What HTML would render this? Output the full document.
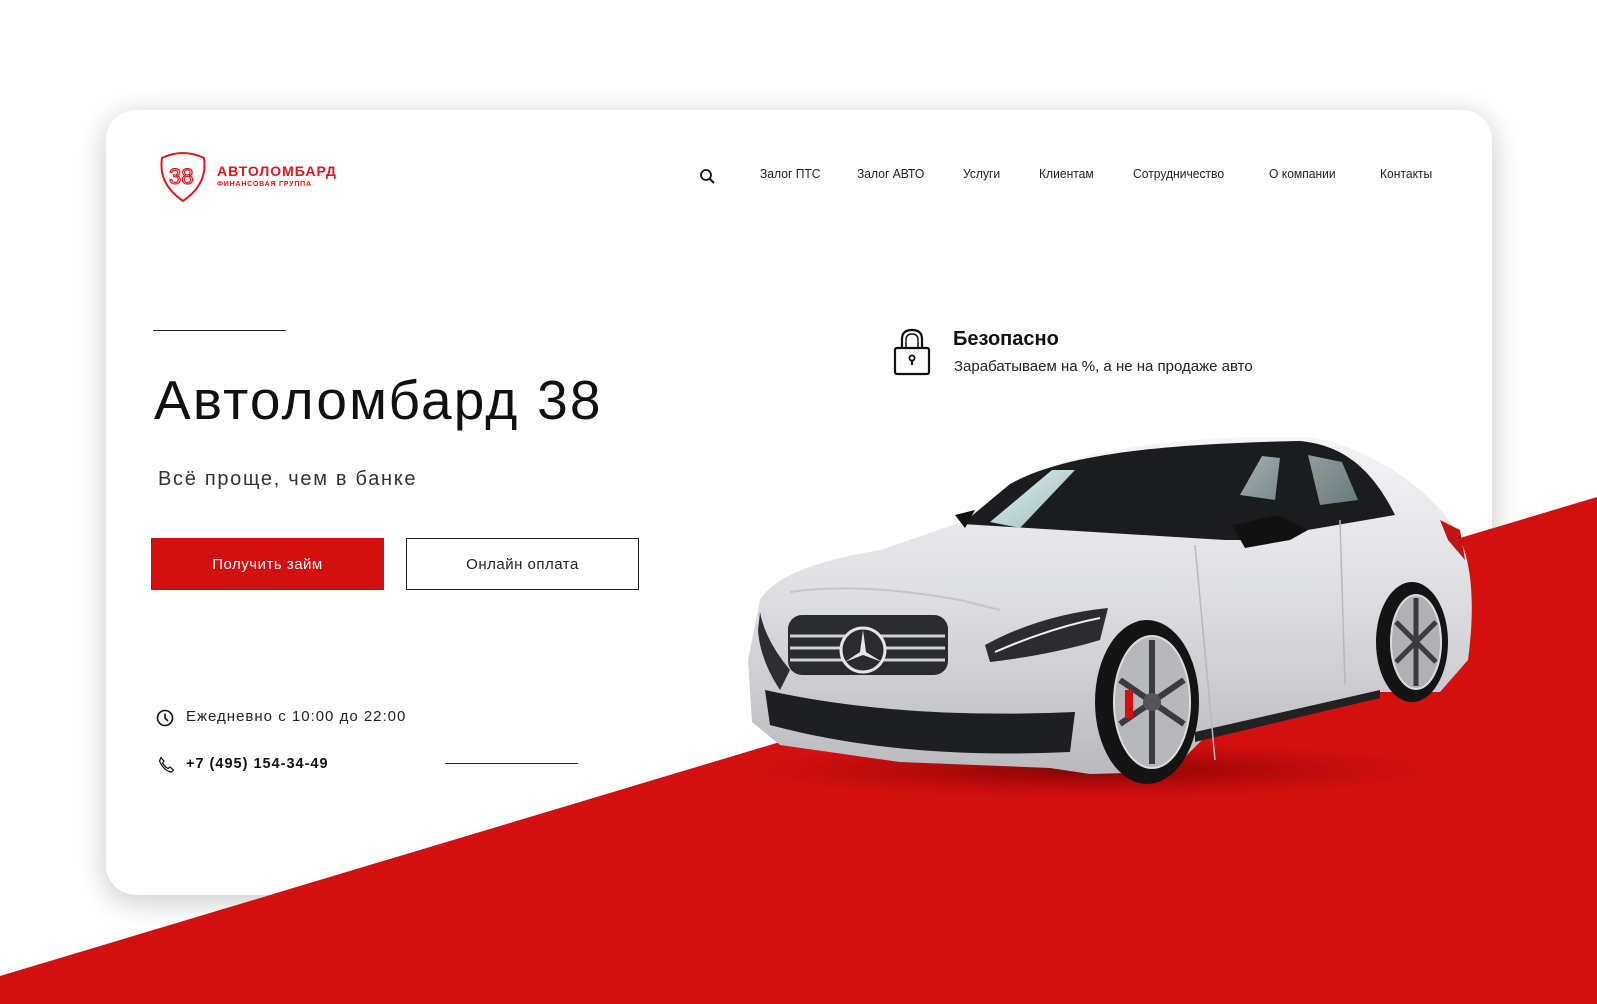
<!DOCTYPE html>
<html><head><meta charset="utf-8"><style>
*{margin:0;padding:0;box-sizing:border-box}
html,body{width:1597px;height:1004px;overflow:hidden;background:#fff;font-family:"Liberation Sans","DejaVu Sans",sans-serif;color:#111}
.abs{position:absolute}
#card{position:absolute;left:106px;top:110px;width:1386px;height:785px;border-radius:30px;background:#fff;box-shadow:0 6px 30px rgba(0,0,0,.22)}
.nav{position:absolute;top:166px;font-size:13px;color:#222;transform:scaleX(.93);transform-origin:left;white-space:nowrap}
.btn{position:absolute;top:538px;width:233px;height:52px;display:flex;align-items:center;justify-content:center;font-size:15px;letter-spacing:.5px}
</style></head><body>
<div id="card"></div>
<svg class="abs" style="left:0;top:0" width="1597" height="1004">
<defs><clipPath id="cc"><rect x="106" y="110" width="1386" height="785" rx="30"/></clipPath>
<radialGradient id="sh"><stop offset="0" stop-color="#5a0000" stop-opacity=".7"/><stop offset="1" stop-color="#a00" stop-opacity="0"/></radialGradient></defs>
<polygon points="0,976 1597,497 1597,1004 0,1004" fill="#d31010"/>
<g clip-path="url(#cc)"><polygon points="0,976 1597,497 1597,1004 0,1004" fill="#d31010"/></g>
</svg>

<!-- logo -->
<svg class="abs" style="left:158px;top:150px" width="54" height="54" viewBox="0 0 54 54">
<path d="M4 8 Q25 -2 46 8 Q50 34 25 51 Q0 34 4 8Z" fill="none" stroke="#e0161b" stroke-width="2"/>
<text x="11" y="34" font-size="22" fill="none" stroke="#e0161b" stroke-width="1.2" font-family="Liberation Sans">38</text>
</svg>
<div class="abs" style="left:217px;top:163px;font-size:14px;font-weight:bold;color:#e0161b;letter-spacing:1px">АВТОЛОМБАРД</div>
<div class="abs" style="left:217px;top:181px;font-size:7px;font-weight:bold;color:#e0161b;letter-spacing:.8px">ФИНАНСОВАЯ ГРУППА</div>

<!-- nav -->
<svg class="abs" style="left:699px;top:168px" width="18" height="18" viewBox="0 0 18 18"><circle cx="7" cy="7" r="5" fill="none" stroke="#111" stroke-width="1.8"/><path d="M10.5 10.5 L15 15" stroke="#111" stroke-width="2"/></svg>
<div class="nav" style="left:760px">Залог ПТС</div>
<div class="nav" style="left:857px">Залог АВТО</div>
<div class="nav" style="left:963px">Услуги</div>
<div class="nav" style="left:1039px">Клиентам</div>
<div class="nav" style="left:1133px">Сотрудничество</div>
<div class="nav" style="left:1269px">О компании</div>
<div class="nav" style="left:1380px">Контакты</div>

<!-- hero -->
<div class="abs" style="left:153px;top:330px;width:133px;height:1px;background:#222"></div>
<div class="abs" style="left:154px;top:368px;font-size:55px;letter-spacing:2.2px;color:#111;white-space:nowrap">Автоломбард 38</div>
<div class="abs" style="left:158px;top:468px;font-size:20px;letter-spacing:1.7px;color:#333;white-space:nowrap">Всё проще, чем в банке</div>
<div class="btn" style="left:151px;background:#d31010;color:#fff">Получить займ</div>
<div class="btn" style="left:406px;border:1.5px solid #222;color:#222">Онлайн оплата</div>

<svg class="abs" style="left:156px;top:709px" width="18" height="18" viewBox="0 0 18 18"><circle cx="9" cy="9" r="7.5" fill="none" stroke="#111" stroke-width="1.6"/><path d="M9 4.5 V9 L12 12" fill="none" stroke="#111" stroke-width="1.6"/></svg>
<div class="abs" style="left:186px;top:708px;font-size:15px;letter-spacing:1px;color:#222;white-space:nowrap">Ежедневно с 10:00 до 22:00</div>
<svg class="abs" style="left:158px;top:756px" width="17" height="17" viewBox="0 0 17 17"><path d="M3 1.5 L6 5 L4.5 7 Q7 11 10 12.5 L12 11 L15.5 14 L13.5 16 Q6 15 1.5 5 Z" fill="none" stroke="#111" stroke-width="1.2"/></svg>
<div class="abs" style="left:186px;top:756px;font-size:14.5px;font-weight:bold;letter-spacing:1px;color:#111;white-space:nowrap">+7 (495) 154-34-49</div>
<div class="abs" style="left:445px;top:763px;width:133px;height:1px;background:#222"></div>

<!-- secure -->
<svg class="abs" style="left:893px;top:327px" width="38" height="50" viewBox="0 0 38 50"><path d="M9 21 V12 Q9 3 19 3 Q29 3 29 12 V21" fill="none" stroke="#111" stroke-width="2.2"/><path d="M13 21 V13 Q13 7 19 7 Q25 7 25 13 V21" fill="none" stroke="#111" stroke-width="1.5"/><rect x="2" y="21" width="34" height="26" rx="2" fill="#fff" stroke="#111" stroke-width="2.2"/><circle cx="19" cy="31" r="2.6" fill="none" stroke="#111" stroke-width="1.8"/><path d="M19 33 V38" stroke="#111" stroke-width="2.2"/></svg>
<div class="abs" style="left:953px;top:328px;font-size:20px;font-weight:bold;color:#111">Безопасно</div>
<div class="abs" style="left:954px;top:358px;font-size:15px;color:#222;white-space:nowrap">Зарабатываем на %, а не на продаже авто</div>

<!-- car -->
<svg class="abs" style="left:0;top:0" width="1597" height="1004">
<defs>
<linearGradient id="bd" x1="0" y1="0" x2="0" y2="1"><stop offset="0" stop-color="#f4f4f6"/><stop offset=".5" stop-color="#dcdde0"/><stop offset="1" stop-color="#b9babe"/></linearGradient>
<linearGradient id="gl" x1="0" y1="0" x2="1" y2="1"><stop offset="0" stop-color="#dff1f2"/><stop offset="1" stop-color="#9fb9bb"/></linearGradient>
</defs>
<ellipse cx="1090" cy="770" rx="360" ry="30" fill="url(#sh)"/>
<path d="M760,600 C775,575 820,560 880,550 L962,522 L1010,485 C1060,455 1150,440 1250,437 L1310,437 C1360,445 1420,480 1450,522 C1472,550 1476,600 1468,660 L1440,692 L1380,692 L1210,732 L1170,772 L1090,774 L1050,768 L900,762 L780,745 L752,722 L748,660 Z" fill="url(#bd)"/>
<path d="M962,524 L1010,484 C1060,456 1150,444 1300,441 C1340,445 1370,465 1395,515 L1250,540 L1225,540 Z" fill="#1b1c1e"/>
<path d="M990,522 L1052,470 L1075,470 L1020,528 Z" fill="url(#gl)"/>
<path d="M1240,495 L1262,456 L1280,458 L1275,500 Z" fill="url(#gl)" opacity=".7"/>
<path d="M1308,455 L1342,462 L1358,500 L1320,505 Z" fill="url(#gl)" opacity=".6"/>
<path d="M1232,525 L1278,515 L1308,530 L1290,540 L1245,548 Z" fill="#111"/>
<path d="M955,515 L975,510 L965,528 Z" fill="#111"/>
<path d="M790,592 Q860,582 960,600 L1000,610" fill="none" stroke="#c5c6c9" stroke-width="2"/>
<rect x="788" y="615" width="160" height="60" rx="14" fill="#2a2b2e"/>
<path d="M790,636 H945 M790,648 H945 M790,660 H945" stroke="#cfd0d3" stroke-width="3"/>
<circle cx="863" cy="650" r="22" fill="#2a2b2e" stroke="#e6e6e8" stroke-width="3"/>
<path d="M863,630 L866,652 L882,662 L863,655 L845,662 L860,652 Z" fill="#e6e6e8"/>
<path d="M985,645 Q1040,615 1108,608 L1100,640 Q1050,655 990,662 Z" fill="#2b2c30"/>
<path d="M995,652 Q1050,628 1100,618" stroke="#f0f0f0" stroke-width="2" fill="none"/>
<path d="M765,690 Q900,720 1075,712 L1070,752 Q900,760 770,725 Z" fill="#1e1f22"/>
<path d="M760,612 Q765,640 790,670 L780,690 Q760,660 758,630 Z" fill="#2d2e31"/>
<path d="M1195,732 L1380,690 L1380,698 L1195,742 Z" fill="#222"/>
<ellipse cx="1147" cy="702" rx="52" ry="82" fill="#141414"/>
<ellipse cx="1152" cy="702" rx="38" ry="66" fill="#b7b8bc" stroke="#ddd" stroke-width="2"/>
<g stroke="#3a3b3e" stroke-width="6"><path d="M1152,640 V764 M1120,680 L1184,724 M1120,724 L1184,680"/></g>
<circle cx="1152" cy="702" r="9" fill="#555"/>
<rect x="1125" y="690" width="8" height="28" fill="#d31010"/>
<ellipse cx="1412" cy="642" rx="36" ry="60" fill="#141414"/>
<ellipse cx="1416" cy="642" rx="25" ry="47" fill="#b0b1b5" stroke="#ddd" stroke-width="2"/>
<g stroke="#3a3b3e" stroke-width="5"><path d="M1416,598 V686 M1396,622 L1436,662 M1396,662 L1436,622"/></g>
<path d="M1440,520 L1460,530 L1465,560 L1448,540 Z" fill="#c21414"/>
<path d="M1195,545 L1215,760" stroke="#b8b9bc" stroke-width="1.5"/>
<path d="M1340,520 L1345,685" stroke="#b8b9bc" stroke-width="1.5"/>
</svg>
</body></html>
